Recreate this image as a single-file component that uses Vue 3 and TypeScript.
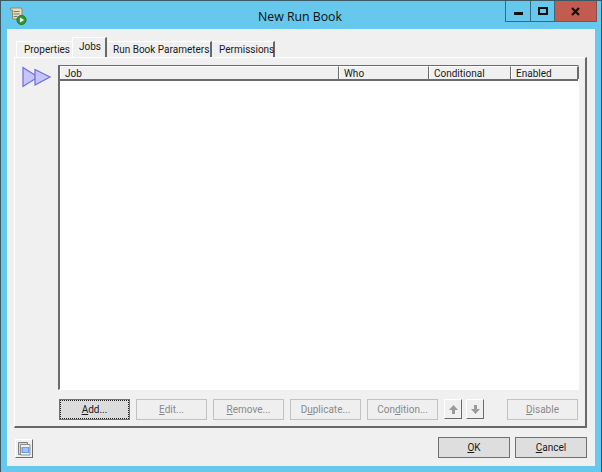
<script setup lang="ts">
const tabs: { label: string; active?: boolean }[] = [
  { label: 'Properties' },
  { label: 'Jobs', active: true },
  { label: 'Run Book Parameters' },
  { label: 'Permissions' },
]
const cols = [
  { label: 'Job', w: 279 },
  { label: 'Who', w: 90 },
  { label: 'Conditional', w: 82 },
  { label: 'Enabled', w: 68 },
]
</script>

<template>
  <div class="window">
    <header class="titlebar">
      <svg class="app-icon" width="18" height="20" viewBox="0 0 18 20">
        <path d="M1.500 2h10.500l1 1v10H3.500V4H1.500z" fill="#e9dfb8" stroke="#8f8a68" />
        <path d="M4.500 5.500h6M4.500 8h6M4.500 10.500h4" stroke="#6e7a80" />
        <circle cx="12.500" cy="14" r="4.500" fill="#2f9e2f" stroke="#1d6f1d" />
        <path d="M11 11.500l4 2.500-4 2.500z" fill="#fff" />
      </svg>
      <h1 class="title">New Run Book</h1>
      <div class="controls">
        <div class="ctl ctl-min"><span class="min-glyph"></span></div>
        <div class="ctl ctl-max"><span class="max-glyph"></span></div>
        <div class="ctl ctl-close">
          <svg width="9" height="9" viewBox="0 0 9 9"><path d="M1 1l7 7M8 1L1 8" stroke="#111" stroke-width="2.200" /></svg>
        </div>
      </div>
    </header>

    <div class="client">
      <nav class="tabs">
        <div v-for="t in tabs" :key="t.label" class="tab" :class="{ active: t.active }">{{ t.label }}</div>
      </nav>

      <section class="pane">
        <div class="rail">
          <svg width="30" height="22" viewBox="0 0 30 22">
            <path d="M1 1.500L16 11 1 20.500z" fill="#c5c5fb" stroke="#6d6de0" stroke-width="1.200" />
            <path d="M13 3.500l15 7.500-15 8z" fill="#c5c5fb" stroke="#6d6de0" stroke-width="1.200" />
          </svg>
        </div>
        <div class="main">
          <div class="grid">
            <div class="grid-head">
              <div v-for="c in cols" :key="c.label" class="col" :style="{ width: c.w + 'px' }">{{ c.label }}</div>
            </div>
            <div class="grid-body"></div>
          </div>
          <div class="actions">
            <button class="btn focus"><u>A</u>dd...</button>
            <button class="btn off"><u>E</u>dit...</button>
            <button class="btn off"><u>R</u>emove...</button>
            <button class="btn off">D<u>u</u>plicate...</button>
            <button class="btn off">Con<u>d</u>ition...</button>
            <button class="arrow">
              <svg width="11" height="11" viewBox="0 0 11 11"><path d="M5.500 1L10 6H7v4H4V6H1z" fill="#9a9a9a" /></svg>
            </button>
            <button class="arrow">
              <svg width="11" height="11" viewBox="0 0 11 11"><path d="M5.500 10L10 5H7V1H4v4H1z" fill="#9a9a9a" /></svg>
            </button>
            <button class="btn off disable"><u>D</u>isable</button>
          </div>
        </div>
      </section>

      <footer class="footer">
        <button class="tool">
          <svg width="14" height="15" viewBox="0 0 14 15">
            <path d="M1.500 1.500h9v12h-9z" fill="#d8d8d8" stroke="#7d7d7d" />
            <path d="M3.500 3.500h9.500v10.500H3.500z" fill="#eef2f6" stroke="#8d8d8d" />
            <path d="M4.500 6h8v6h-8z" fill="#6f9ee8" />
            <path d="M6 8h5M6 10h5" stroke="#dbe7fa" />
          </svg>
        </button>
        <div class="footer-btns">
          <button class="btn dlg"><u>O</u>K</button>
          <button class="btn dlg"><u>C</u>ancel</button>
        </div>
      </footer>
    </div>
  </div>
</template>

<style>
html, body { margin: 0; background: #66c8ec; }
</style>

<style scoped>
.window {
  width: 602px;
  height: 472px;
  box-sizing: border-box;
  background: #66c8ec;
  border: 1px solid #3c5a66;
  border-bottom: 0;
  padding: 0 6px 6px;
  display: flex;
  flex-direction: column;
  font-family: "Roboto", "Liberation Sans", sans-serif;
  font-size: 10px;
  color: #1a1a1a;
}
.titlebar {
  height: 28px;
  flex: none;
  display: flex;
  align-items: flex-start;
  position: relative;
  margin-right: -6px;
}
.app-icon { margin: 5px 0 0 2px; }
.title {
  position: absolute;
  left: 0;
  right: 8px;
  top: 6px;
  margin: 0;
  text-align: center;
  font: 400 12.300px/19px "Open Sans", sans-serif;
  color: #111;
}
.controls {
  position: absolute;
  right: 4px;
  top: 0;
  display: flex;
  height: 21px;
}
.ctl {
  height: 20px;
  border: 1px solid #3c6a7c;
  border-top: 0;
  display: flex;
  align-items: center;
  justify-content: center;
  box-sizing: content-box;
}
.ctl-min { width: 24px; }
.ctl-max { width: 23px; border-left: 0; }
.ctl-close { width: 41px; background: #c35c50; border-left: 0; border-color: #8a4d48; }
.min-glyph { width: 9px; height: 3px; background: #111; margin-top: 4px; }
.max-glyph { width: 6px; height: 4px; border: 2px solid #111; }
.client {
  flex: 1;
  background: #f0f0f0;
  display: flex;
  flex-direction: column;
  padding: 8px 7px 0 7px;
  min-height: 0;
}
.tabs {
  display: flex;
  align-items: flex-end;
  height: 20px;
  flex: none;
  padding-left: 2px;
}
.tab {
  height: 16px;
  box-sizing: border-box;
  padding: 0 3px 0 7px;
  line-height: 15px;
  white-space: nowrap;
  border-top: 1px solid #fff;
  border-left: 1px solid #fff;
  border-right: 2px solid #696969;
}
.tab:nth-child(1) { width: 56px; border-right: 0; }
.tab:nth-child(2) { width: 35px; height: 20px; line-height: 17px; background: #f0f0f0; padding-left: 6px; }
.tab:nth-child(3) { width: 105px; padding-left: 6px; border-left: 0; }
.tab:nth-child(4) { width: 63px; padding-left: 7px; border-left: 0; }
.pane {
  height: 371px;
  flex: none;
  box-sizing: border-box;
  width: 573px;
  border-top: 1px solid #fff;
  border-left: 1px solid #fff;
  border-right: 2px solid #696969;
  border-bottom: 2px solid #696969;
  display: flex;
}
.rail {
  width: 43px;
  flex: none;
  padding: 8px 0 0 7px;
  box-sizing: border-box;
}
.main {
  width: 521px;
  flex: none;
  padding-top: 7px;
  display: flex;
  flex-direction: column;
}
.grid {
  height: 325px;
  box-sizing: border-box;
  background: #fff;
  border-top: 1px solid #6b6b6b;
  border-left: 2px solid #6b6b6b;
  border-right: 1px solid #fff;
  border-bottom: 1px solid #fff;
  display: flex;
  flex-direction: column;
}
.grid-head {
  display: flex;
  height: 15px;
  flex: none;
  background: #f0f0f0;
  border-bottom: 2px solid #6b6b6b;
  box-sizing: border-box;
}
.col {
  box-sizing: border-box;
  flex: none;
  padding-left: 4px;
  line-height: 14px;
  border-left: 1px solid #fff;
  border-top: 1px solid #fff;
  border-right: 1px solid #6b6b6b;
}
.col:last-child { border-right: 2px solid #6b6b6b; }
.grid-body { flex: 1; background: #fff; }
.actions {
  margin-top: 9px;
  display: flex;
  gap: 6px;
  padding-left: 1px;
  align-items: flex-start;
}
.btn {
  width: 71px;
  height: 21px;
  padding: 0;
  box-sizing: border-box;
  font: inherit;
  background: #dedede;
  border: 1px solid #707070;
  color: #1a1a1a;
}
.btn u { text-decoration-thickness: 1px; text-underline-offset: 1px; }
.btn.off {
  background: #efefef;
  border-color: #c2c2c2;
  color: #8a8a8a;
}
.btn.focus {
  border-color: #3c7fb1;
  outline: 1px dotted #222;
  outline-offset: -2px;
  background: #dcdcdc;
}
.arrow {
  width: 18px;
  height: 20px;
  padding: 0;
  background: #f0f0f0;
  border: 1px solid;
  border-color: #fff #6b6b6b #6b6b6b #fff;
  display: flex;
  align-items: center;
  justify-content: center;
}
.arrow + .arrow { margin-left: -2px; }
.disable { margin-left: 17px; }
.footer {
  flex: 1;
  display: flex;
  justify-content: space-between;
  padding: 9px 1px 0 1px;
  align-items: flex-start;
}
.tool {
  width: 18px;
  height: 19px;
  padding: 0;
  margin-top: 2px;
  background: #f0f0f0;
  border: 1px solid;
  border-color: #fff #6b6b6b #6b6b6b #fff;
  display: flex;
  align-items: center;
  justify-content: center;
}
.footer-btns { display: flex; gap: 5px; }
.dlg { width: 72px; }
</style>
